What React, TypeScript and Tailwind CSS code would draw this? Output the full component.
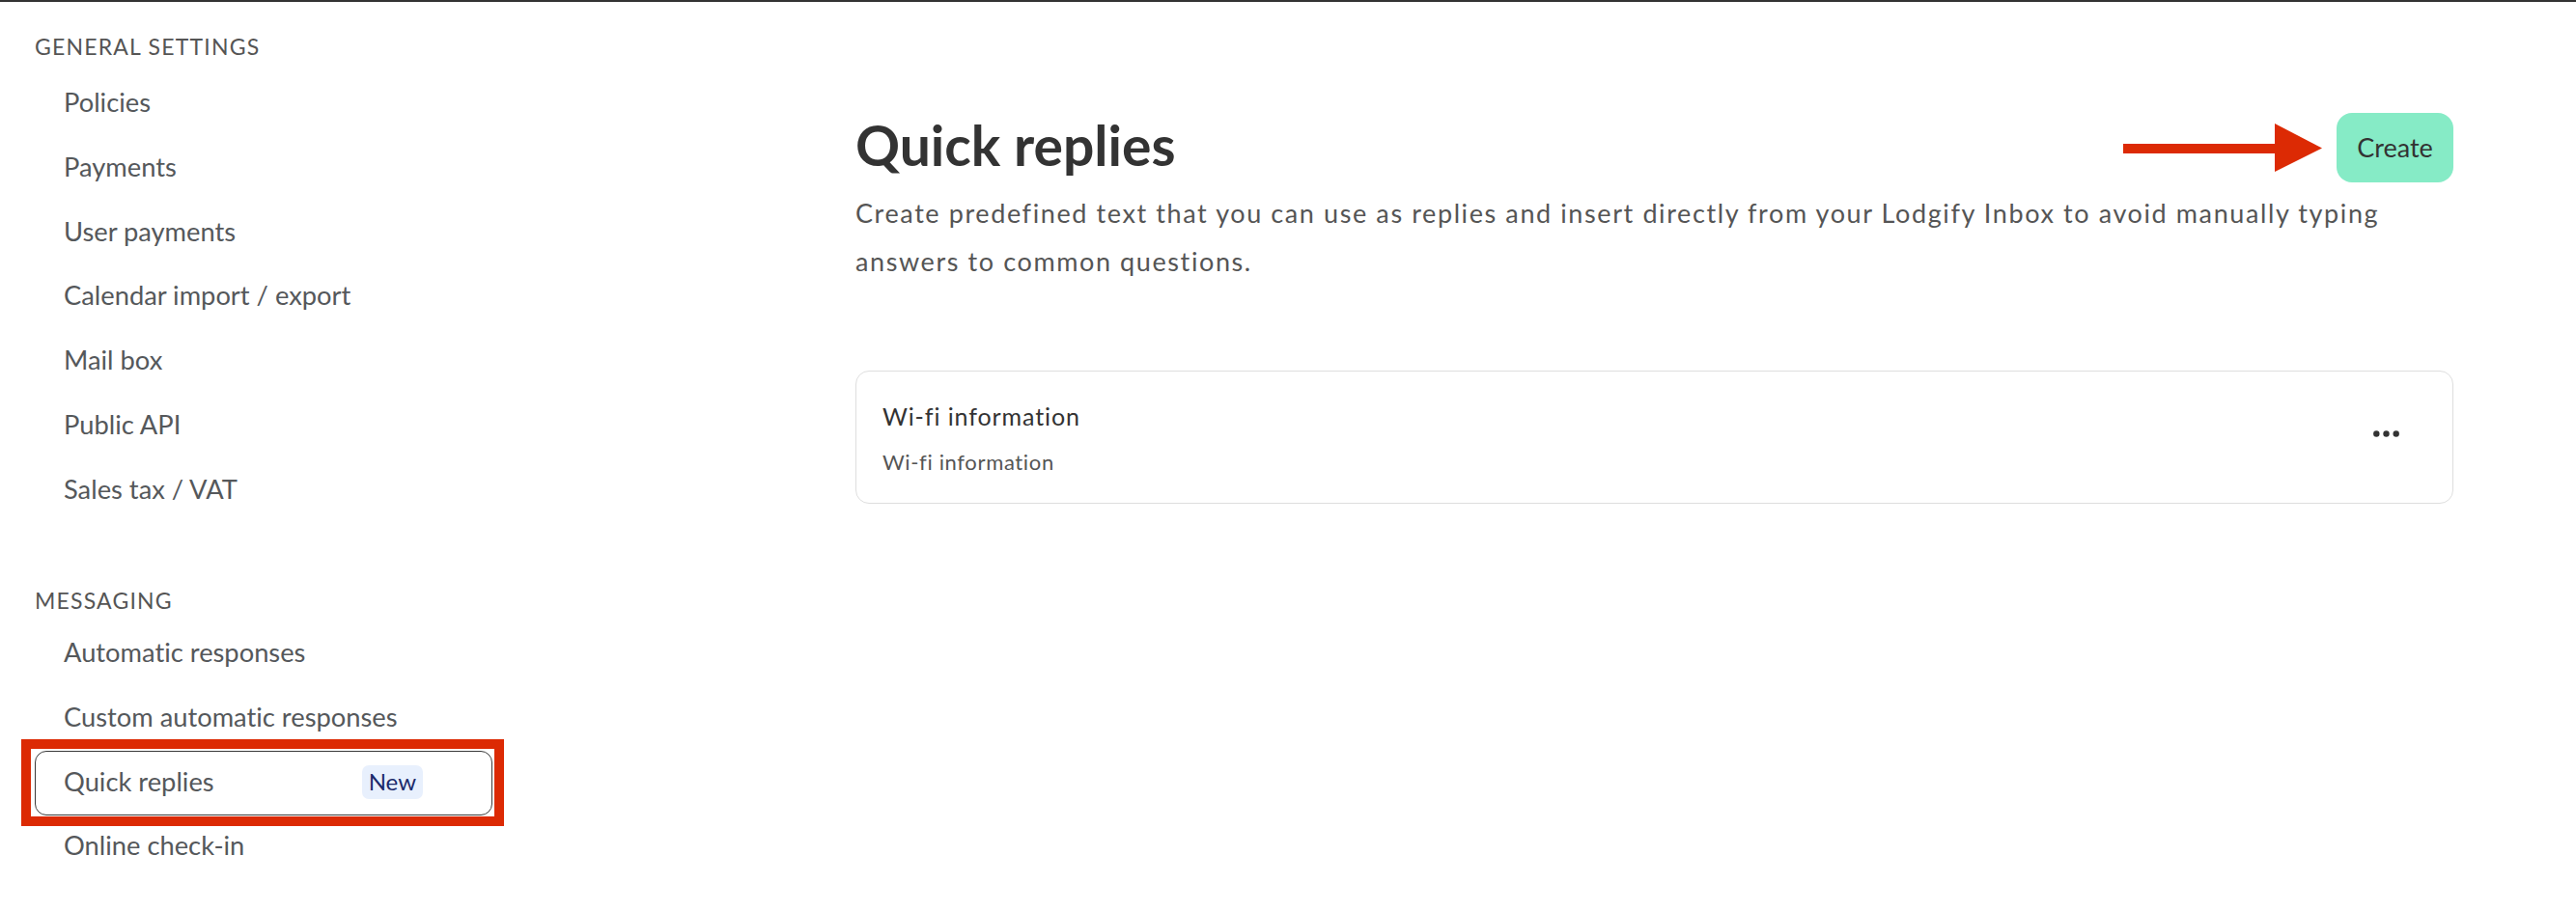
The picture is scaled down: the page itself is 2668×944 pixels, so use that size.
const FONT = "font-['Lato','Liberation_Sans',sans-serif] [font-variant-ligatures:none]";

const general = [
  "Policies",
  "Payments",
  "User payments",
  "Calendar import / export",
  "Mail box",
  "Public API",
  "Sales tax / VAT",
];

const messaging = [
  "Automatic responses",
  "Custom automatic responses",
  "Quick replies",
  "Online check-in",
];

function NavItem({ label, active }: { label: string; active?: boolean }) {
  return (
    <div className="relative ml-[36px] w-[474px]">
      <div
        className={
          "flex h-[66.7px] items-center rounded-[12px] border pb-[3px] pl-[29px] text-[27.3px] text-[#55585b] " +
          (active ? "border-[#3a3a3a] bg-white" : "border-transparent")
        }
      >
        <span>{label}</span>
        {active && (
          <span className="ml-auto mr-[71px] flex h-[35px] items-center rounded-[7px] bg-[#e8f0fd] px-[7px] text-[24px] text-[#1b2a6b]">
            New
          </span>
        )}
      </div>
      {/* annotation box around the active row */}
      {active && (
        <div className="pointer-events-none absolute -bottom-[11px] -left-[14px] -right-[12px] -top-[12px] border-[10px] border-[#dc2a04]" />
      )}
    </div>
  );
}

function Section({
  title,
  items,
  active,
  className = "",
  listClass = "mt-[12px]",
}: {
  title: string;
  items: string[];
  active?: string;
  className?: string;
  listClass?: string;
}) {
  return (
    <div className={className}>
      <p className="ml-[36px] h-[30px] text-[23px] leading-[33px] tracking-[1.2px] text-[#555]">{title}</p>
      <div className={listClass}>
        {items.map((i) => (
          <NavItem key={i} label={i} active={i === active} />
        ))}
      </div>
    </div>
  );
}

function Dots() {
  return (
    <svg width="27" height="7" viewBox="0 0 27 7" className="mb-[8px]">
      <circle cx="3.3" cy="3.5" r="3.2" fill="#333" />
      <circle cx="13.5" cy="3.5" r="3.2" fill="#333" />
      <circle cx="23.7" cy="3.5" r="3.2" fill="#333" />
    </svg>
  );
}

export default function App() {
  return (
    <div className={`${FONT} flex min-h-screen border-t-2 border-[#333] bg-white`}>
      <aside className="w-[560px] shrink-0 pt-[30px]">
        <Section title="GENERAL SETTINGS" items={general} listClass="mt-[13px]" />
        <Section
          title="MESSAGING"
          items={messaging}
          active="Quick replies"
          className="mt-[64px]"
          listClass="mt-[9px]"
        />
      </aside>

      <main className="flex-1 pl-[326px] pr-[127px] pt-[115px]">
        <div className="flex items-start justify-between">
          <h1 className="mt-[1px] text-[57px] font-bold leading-[64px] text-[#333]">Quick replies</h1>
          <div className="flex items-center gap-[15px]">
            {/* annotation arrow */}
            <svg width="206" height="50" viewBox="0 0 206 50">
              <rect x="0" y="21" width="158" height="10" fill="#dc2a04" />
              <polygon points="157,0 206,25.5 157,50" fill="#dc2a04" />
            </svg>
            <button
              type="button"
              className="flex h-[72px] w-[121px] items-center justify-center rounded-[16px] bg-[#86ebc6] text-[27px] text-[#333]"
            >
              Create
            </button>
          </div>
        </div>

        <p className="mt-[7px] text-[27px] leading-[50px] tracking-[1.6px] text-[#555]">
          Create predefined text that you can use as replies and insert directly from your Lodgify Inbox to avoid
          manually typing answers to common questions.
        </p>

        <div className="mt-[88px] flex h-[138px] items-center justify-between rounded-[14px] border border-[#dedede] pl-[27px] pr-[55px]">
          <div className="mt-[2px]">
            <p className="text-[25px] leading-[32px] tracking-[0.9px] text-[#333]">Wi-fi information</p>
            <p className="mt-[17px] text-[22px] leading-[30px] tracking-[0.65px] text-[#555]">Wi-fi information</p>
          </div>
          <Dots />
        </div>
      </main>
    </div>
  );
}
